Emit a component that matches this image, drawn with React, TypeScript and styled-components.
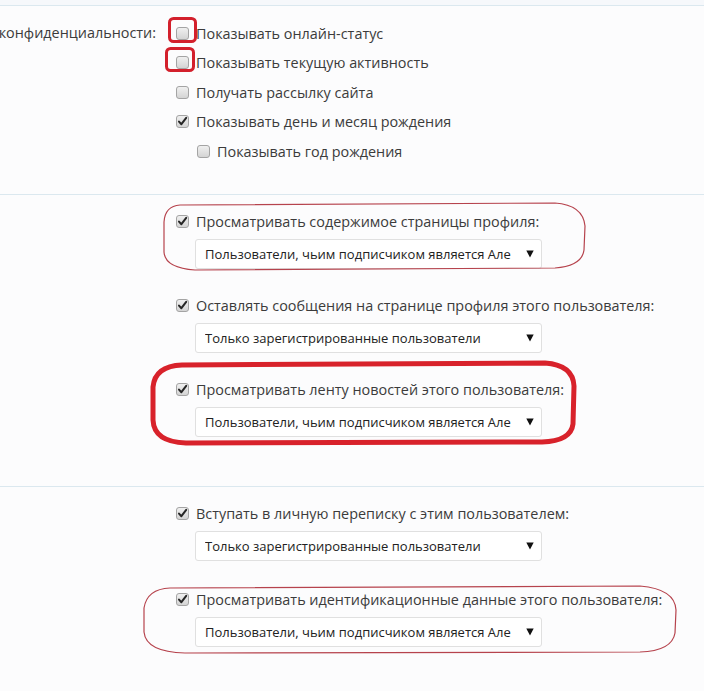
import { FunctionComponent } from 'react'
import styled, { createGlobalStyle } from 'styled-components'

const GlobalStyle = createGlobalStyle`
  html, body {
    margin: 0;
    padding: 0;
    background: #fcfcfd;
    overflow: hidden;
  }
  body {
    font-family: "Open Sans", "Noto Sans", sans-serif;
    color: #3b3b3b;
  }
`

const ANYONE = 'Пользователи, чьим подписчиком является Але'
const REGISTERED = 'Только зарегистрированные пользователи'

interface Check {
  label: string
  checked: boolean
  nested?: boolean
}

interface Permission {
  label: string
  value: string
}

const privacy: Check[] = [
  { label: 'Показывать онлайн-статус', checked: false },
  { label: 'Показывать текущую активность', checked: false },
  { label: 'Получать рассылку сайта', checked: false },
  { label: 'Показывать день и месяц рождения', checked: true },
  { label: 'Показывать год рождения', checked: false, nested: true },
]

const profile: Permission[] = [
  { label: 'Просматривать содержимое страницы профиля:', value: ANYONE },
  { label: 'Оставлять сообщения на странице профиля этого пользователя:', value: REGISTERED },
  { label: 'Просматривать ленту новостей этого пользователя:', value: ANYONE },
]

const contact: Permission[] = [
  { label: 'Вступать в личную переписку с этим пользователем:', value: REGISTERED },
  { label: 'Просматривать идентификационные данные этого пользователя:', value: ANYONE },
]

const CheckBox: FunctionComponent<{ checked: boolean }> = ({ checked }) => (
  <Box>
    {checked && (
      <svg width="11" height="11" viewBox="0 0 11 11">
        <path d="M2 5.6 L4.4 8.2 L9.2 1.8" fill="none" stroke="#262626" strokeWidth="2" strokeLinecap="round" strokeLinejoin="round" />
      </svg>
    )}
  </Box>
)

const Dropdown: FunctionComponent<{ value: string }> = ({ value }) => (
  <Select>
    <SelectText>{value}</SelectText>
    <svg width="8" height="8" viewBox="0 0 8 8">
      <path d="M0.3 0.5 L7.7 0.5 L4 7.5 Z" fill="#111" />
    </svg>
  </Select>
)

const PermissionList: FunctionComponent<{ items: Permission[]; gap: number }> = ({ items, gap }) => (
  <Stack $gap={gap}>
    {items.map((p) => (
      <div key={p.label}>
        <Option>
          <CheckBox checked />
          <span>{p.label}</span>
        </Option>
        <Dropdown value={p.value} />
      </div>
    ))}
  </Stack>
)

export default function App() {
  return (
    <Page>
      <GlobalStyle />
      <Section $top={17} $bottom={33}>
        <Label>конфиденциальности:</Label>
        <Checks>
          {privacy.map((c) => (
            <Option key={c.label} $nested={c.nested}>
              <CheckBox checked={c.checked} />
              <span>{c.label}</span>
            </Option>
          ))}
        </Checks>
      </Section>
      <Section $top={16} $bottom={49}>
        <Label />
        <PermissionList items={profile} gap={26} />
      </Section>
      <Section $top={16} $bottom={60}>
        <Label />
        <PermissionList items={contact} gap={28} />
      </Section>

      <Marks width="704" height="691" viewBox="0 0 704 691">
        <rect x="169.5" y="18.5" width="26" height="23" rx="4" fill="none" stroke="#d3202c" strokeWidth="3" />
        <rect x="166.5" y="48.5" width="27" height="22" rx="4" fill="none" stroke="#d3202c" strokeWidth="3" />
        <path
          d="M180 205 L555 203 Q583 205 585 226 L584 250 Q582 266 555 268 L195 270 Q165 268 164 252 L164 222 Q165 206 180 205 Z"
          fill="none" stroke="#b6434d" strokeWidth="1.2"
        />
        <path
          d="M182 365 L545 363 Q573 365 574 386 L573 424 Q571 441 542 442 L186 443 Q154 442 153 420 L153 387 Q155 366 182 365 Z"
          fill="none" stroke="#d8222b" strokeWidth="5"
        />
        <path
          d="M170 588 L640 586 Q675 589 676 610 L675 633 Q672 651 640 652 L185 653 Q146 652 144 632 L144 608 Q147 589 170 588 Z"
          fill="none" stroke="#b6434d" strokeWidth="1.2"
        />
      </Marks>
    </Page>
  )
}

const Page = styled.div`
  position: relative;
  width: 704px;
  height: 691px;
  overflow: hidden;
  background: #fcfcfd;
  &::before {
    content: '';
    display: block;
    height: 5px;
    background: #f6f8fb;
  }
`

const Section = styled.div<{ $top: number; $bottom: number }>`
  display: grid;
  grid-template-columns: 168px 1fr;
  column-gap: 8px;
  border-top: 1px solid #dbe8ef;
  padding: ${(p) => p.$top}px 0 ${(p) => p.$bottom}px;
`

const Label = styled.div`
  display: flex;
  justify-content: flex-end;
  white-space: nowrap;
  height: 20px;
  line-height: 20px;
  font-size: 14.4px;
  margin-right: 12px;
`

const Checks = styled.div`
  display: flex;
  flex-direction: column;
  gap: 9.5px;
`

const Stack = styled.div<{ $gap: number }>`
  display: flex;
  flex-direction: column;
  gap: ${(p) => p.$gap}px;
`

const Option = styled.label<{ $nested?: boolean }>`
  display: flex;
  align-items: center;
  gap: 7px;
  height: 20px;
  font-size: 14.4px;
  white-space: nowrap;
  margin-left: ${(p) => (p.$nested ? 21 : 0)}px;
`

const Box = styled.span`
  width: 13px;
  height: 13px;
  box-sizing: border-box;
  border: 1px solid #a4a4a4;
  border-radius: 3px;
  background: linear-gradient(#f0f0f0, #d4d4d4);
  display: flex;
  align-items: center;
  justify-content: center;
  flex-shrink: 0;
`

const Select = styled.div`
  margin: 8px 0 0 19px;
  width: 347px;
  height: 30px;
  box-sizing: border-box;
  border: 1px solid #e0e0e0;
  border-radius: 3px;
  background: #fff;
  display: flex;
  align-items: center;
  padding: 0 7px 0 9px;
  gap: 6px;
  font-size: 13px;
  color: #222;
`

const SelectText = styled.span`
  flex: 1;
  overflow: hidden;
  white-space: nowrap;
`

const Marks = styled.svg`
  position: absolute;
  top: 0;
  left: 0;
  pointer-events: none;
`
